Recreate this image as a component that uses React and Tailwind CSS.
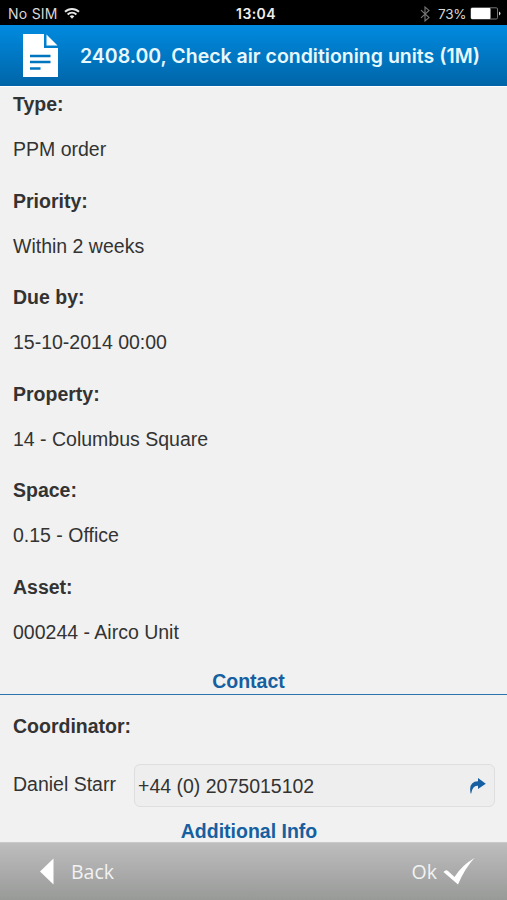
const fields = [
  ['Type:', 'PPM order'],
  ['Priority:', 'Within 2 weeks'],
  ['Due by:', '15-10-2014 00:00'],
  ['Property:', '14 - Columbus Square'],
  ['Space:', '0.15 - Office'],
  ['Asset:', '000244 - Airco Unit'],
];

function StatusBar() {
  return (
    <div className="flex h-[25px] shrink-0 items-center bg-black pt-[2px] font-['Inter',sans-serif] text-[13.5px] text-[#d8d8d8]">
      <div className="flex w-[169px] items-center pl-[8px]">
        <span className="w-[56px] whitespace-nowrap text-[14px] tracking-[0.25px]">No SIM</span>
        <svg width="16" height="13" viewBox="0 0 16 13" fill="none" stroke="#e8e8e8" strokeWidth="1.9">
          <path d="M1 4.8a10 10 0 0 1 14 0M3.6 7.5a6.2 6.2 0 0 1 8.8 0" />
          <path d="M5.7 9.3a3.3 3.3 0 0 1 4.6 0L8 11.8z" fill="#e8e8e8" stroke="none" />
        </svg>
      </div>
      <span className="w-[174px] text-center text-[14px] font-semibold tracking-[0.4px] text-[#eee]">13:04</span>
      <div className="flex flex-1 items-center justify-end pr-[6px]">
        <svg width="10" height="16" viewBox="0 0 10 16" fill="none" stroke="#777" strokeWidth="1.1">
          <path d="M1 4.2l8 7.4L5 15V1l4 3.4-8 7.4" />
        </svg>
        <span className="ml-[8px] w-[29px] whitespace-nowrap tracking-[-0.2px]">73%</span>
        <svg className="ml-[3px]" width="31" height="13" viewBox="0 0 31 13">
          <rect x="1" y=".8" width="26.5" height="11.2" rx="1.2" fill="none" stroke="#777" />
          <rect x="1" y="1" width="19.5" height="11" rx="1" fill="#fff" />
          <path d="M29 4.5q3 2 0 4z" fill="#ddd" />
        </svg>
      </div>
    </div>
  );
}

function Header() {
  return (
    <header className="flex h-[61px] shrink-0 items-center bg-linear-to-b from-[#008be0] to-[#0065a8] pl-[23px]">
      <svg width="35" height="43" viewBox="0 0 35 43">
        <path d="M0 0H21V14H35V43H0z" fill="#fff" />
        <path d="M23.5.5V11.5H34.5z" fill="#fff" />
        <path d="M7 22H27.5M7 28H27.5M7 34.5H17.5" stroke="#0075bf" strokeWidth="2.6" />
      </svg>
      <h1 className="ml-[22px] whitespace-nowrap font-['Inter',sans-serif] text-[19.5px] leading-[24px] font-semibold text-[#e8f8ff]">
        2408.00, Check air conditioning units (1M)
      </h1>
    </header>
  );
}

function Footer() {
  return (
    <footer className="flex h-[58px] shrink-0 items-center justify-between border-t border-[#cacaca] bg-linear-to-b from-[#bdbdbd] to-[#989a98] pr-[32px] pl-[40px] font-['Open_Sans',sans-serif] text-[19.5px] text-[#f2f2f2]">
      <button className="flex items-center">
        <svg width="14" height="27" viewBox="0 0 14 27">
          <path d="M13.5.5V26.5L0 13.5z" fill="#fff" />
        </svg>
        <span className="ml-[17px]">Back</span>
      </button>
      <button className="flex items-center">
        <span>Ok</span>
        <svg className="ml-[6px]" width="32" height="28" viewBox="0 0 32 28">
          <path d="M.5 14Q3 11 5 13L11.5 19Q19 7 31.5 0Q22 10 15 26.5z" fill="#fff" />
        </svg>
      </button>
    </footer>
  );
}

export default function App() {
  return (
    <div className="flex h-[900px] w-[507px] flex-col overflow-hidden bg-[#f1f1f1] font-['Liberation_Sans',Arial,sans-serif] text-[19.5px] leading-[24px] text-[#333]">
      <StatusBar />
      <Header />
      <main className="flex min-h-0 flex-1 flex-col overflow-hidden border-t border-white pt-[5px]">
        <dl className="h-[578px] shrink-0 pl-[13px]">
          {fields.map(([label, value]) => (
            <div key={label} className="h-[96.5px]">
              <dt className="h-[45.25px] font-bold">{label}</dt>
              <dd>{value}</dd>
            </div>
          ))}
        </dl>
        <h2 className="h-[24.5px] shrink-0 border-b-[1.5px] border-[#2d74ad] pr-[10px] text-center leading-[22px] font-bold text-[#165fa0]">Contact</h2>
        <div className="mt-[19.5px] shrink-0 pl-[13px] font-bold">Coordinator:</div>
        <div className="mt-[26px] flex h-[43px] shrink-0 items-center pr-[12px] pl-[13px]">
          <span className="w-[121px] pb-[3px]">Daniel Starr</span>
          <div className="flex h-[43px] flex-1 items-center justify-between rounded-[6px] border border-[#dedede] bg-[#eeeeee] pr-[8px] pl-[3px]">
            <span>+44 (0) 2075015102</span>
            <svg width="16" height="16" viewBox="0 0 16 16">
              <path d="M8 0L15.8 5.8 8 11V7.8Q2.5 7.2 1.2 15.5H.6Q-1.8 3.5 8 3.2z" fill="#165fa0" />
            </svg>
          </div>
        </div>
        <h2 className="mt-[12px] shrink-0 pr-[9px] text-center font-bold text-[#165fa0]">Additional Info</h2>
      </main>
      <Footer />
    </div>
  );
}
